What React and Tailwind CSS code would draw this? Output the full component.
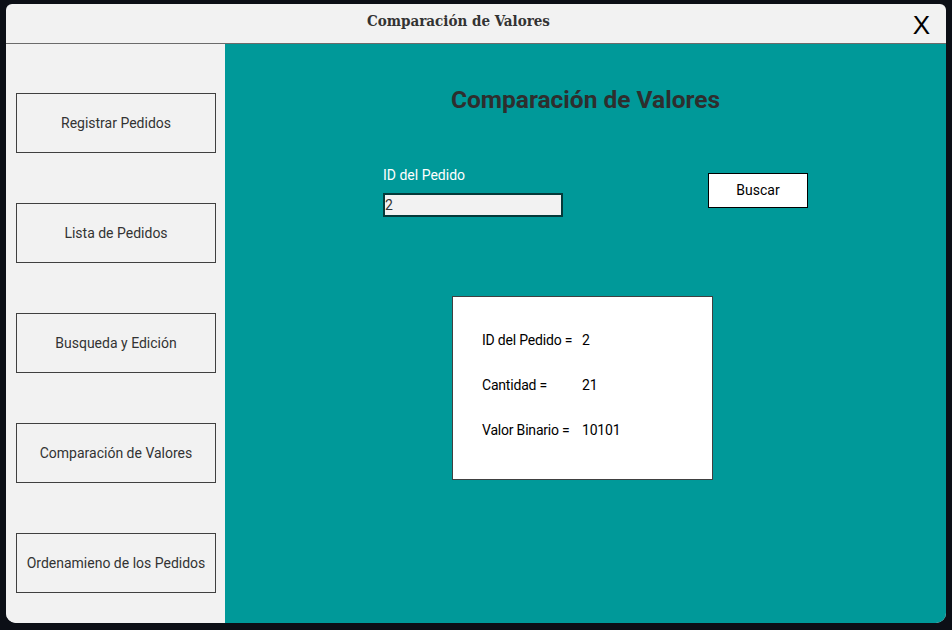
const menu = [
  'Registrar Pedidos',
  'Lista de Pedidos',
  'Busqueda y Edición',
  'Comparación de Valores',
  'Ordenamieno de los Pedidos',
]

const rows = [
  ['ID del Pedido =', '2'],
  ['Cantidad =', '21'],
  ['Valor Binario =', '10101'],
]

export default function App() {
  return (
    <div className="w-[952px] h-[630px] bg-[#0c0f16] pt-[4px] px-[6px] pb-[7px] font-['Roboto',sans-serif]">
      <div className="h-full flex flex-col rounded-t-[6px] rounded-b-[10px] overflow-hidden bg-[#f2f2f2]">
        <div className="h-[40px] shrink-0 relative flex items-center justify-center border-b border-[#6b6b6b] pr-[35px] pb-[4px]">
          <span className="font-['DejaVu_Serif_Condensed','DejaVu_Serif',serif] font-bold text-[15px] text-[#333]">
            Comparación de Valores
          </span>
          <span className="absolute right-[16px] top-[8px] text-[26px] leading-none text-black font-['Liberation_Sans',sans-serif]">
            X
          </span>
        </div>
        <div className="flex-1 flex">
          <div className="w-[219px] shrink-0 bg-[#f2f2f2] pl-[10px] pt-[49px] flex flex-col gap-[50px]">
            {menu.map((m) => (
              <div
                key={m}
                className="w-[200px] h-[60px] border border-[#404040] flex items-center justify-center text-[14px] text-[#333]"
              >
                {m}
              </div>
            ))}
          </div>
          <div className="flex-1 bg-[#009999]">
            <h1 className="pt-[42px] text-center text-[24.5px] leading-[28px] font-bold text-[#2e2e2e]">
              Comparación de Valores
            </h1>
            <div className="mt-[51px] ml-[158px] flex">
              <div className="w-[180px]">
                <div className="text-[14px] leading-[20px] text-white">ID del Pedido</div>
                <div className="mt-[8px] h-[24px] border-2 border-[#043a3a] bg-[#f2f2f2] text-[14px] leading-[20px] text-[#333] px-0">
                  2
                </div>
              </div>
              <button className="ml-[145px] mt-[8px] w-[100px] h-[35px] bg-white border border-black text-[14px] text-black">
                Buscar
              </button>
            </div>
            <div className="mt-[79px] ml-[227px] w-[261px] h-[184px] bg-white border border-[#404040] pl-[29px] pt-[33px] flex flex-col gap-[25px]">
              {rows.map(([k, v]) => (
                <div key={k} className="flex text-[14px] leading-[20px] text-black tracking-[-0.2px]">
                  <span className="w-[100px]">{k}</span>
                  <span>{v}</span>
                </div>
              ))}
            </div>
          </div>
        </div>
      </div>
    </div>
  )
}
